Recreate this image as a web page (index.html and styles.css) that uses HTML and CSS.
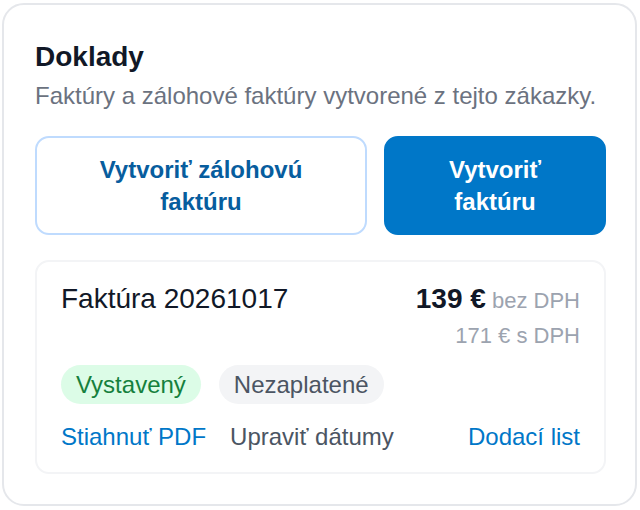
FILE: index.html
```html
<!DOCTYPE html>
<html lang="sk">
<head>
<meta charset="utf-8">
<title>Doklady</title>
<link rel="stylesheet" href="styles.css">
</head>
<body>
<section class="panel">
  <h2 class="panel-title">Doklady</h2>
  <p class="panel-sub">Faktúry a zálohové faktúry vytvorené z tejto zákazky.</p>
  <div class="actions">
    <button class="btn btn-outline">Vytvoriť zálohovú faktúru</button>
    <button class="btn btn-primary">Vytvoriť faktúru</button>
  </div>
  <div class="invoice">
    <div class="invoice-head">
      <div class="invoice-name">Faktúra 20261017</div>
      <div class="invoice-price">
        <div class="price-main"><strong>139 €</strong> <span class="muted">bez DPH</span></div>
        <div class="price-vat">171 € s DPH</div>
      </div>
    </div>
    <div class="badges">
      <span class="badge badge-green">Vystavený</span>
      <span class="badge badge-gray">Nezaplatené</span>
    </div>
    <div class="links">
      <a class="link link-blue" href="#">Stiahnuť PDF</a>
      <a class="link link-gray" href="#">Upraviť dátumy</a>
      <a class="link link-blue link-end" href="#">Dodací list</a>
    </div>
  </div>
</section>
</body>
</html>
```
FILE: styles.css
```css
* { box-sizing: border-box; }
html, body { margin: 0; padding: 0; background: #ffffff; }
body {
  font-family: "Liberation Sans", Arial, sans-serif;
  color: #111827;
  padding: 3px 3px 4px 2px;
}
.panel {
  border: 2px solid #e5e7eb;
  border-radius: 22px;
  padding: 34px 29px 0 31px;
  height: 503px;
  background: #fff;
}
.panel-title {
  margin: 0;
  font-size: 28px;
  line-height: 36px;
  font-weight: 700;
  color: #111827;
}
.panel-sub {
  margin: 5px 0 0 0;
  font-size: 24px;
  line-height: 32px;
  color: #6b7280;
}
.actions {
  display: grid;
  grid-template-columns: 332fr 222fr;
  gap: 17px;
  margin-top: 24px;
}
.btn {
  font-family: inherit;
  font-size: 24px;
  font-weight: 700;
  line-height: 32px;
  height: 99px;
  border-radius: 14px;
  padding: 0 24px;
  cursor: pointer;
}
.btn-outline {
  background: #fff;
  border: 2px solid #bfdbfe;
  color: #075d9e;
}
.btn-primary {
  background: #0077c8;
  border: 2px solid #0077c8;
  color: #fff;
}
.invoice {
  margin-top: 25px;
  border: 2px solid #f3f4f6;
  border-radius: 14px;
  padding: 19px 24px 19px 24px;
}
.invoice-head {
  display: flex;
  justify-content: space-between;
  align-items: flex-start;
}
.invoice-name {
  font-size: 28px;
  line-height: 36px;
  color: #111827;
}
.invoice-price { text-align: right; }
.price-main { font-size: 22px; line-height: 36px; color: #9ca3af; }
.price-main strong { font-size: 28px; color: #111827; }
.price-vat { font-size: 22px; line-height: 34px; color: #9ca3af; }
.badges {
  display: flex;
  gap: 18px;
  margin-top: 12px;
}
.badge {
  font-size: 24px;
  line-height: 39px;
  padding: 0 15px;
  border-radius: 20px;
}
.badge-green { background: #dcfce7; color: #15803d; }
.badge-gray { background: #f3f4f6; color: #4b5563; }
.links {
  display: flex;
  gap: 24px;
  margin-top: 17px;
  font-size: 24px;
  line-height: 32px;
}
.link { text-decoration: none; }
.link-blue { color: #0077c8; }
.link-gray { color: #4b5563; }
.link-end { margin-left: auto; }
```
